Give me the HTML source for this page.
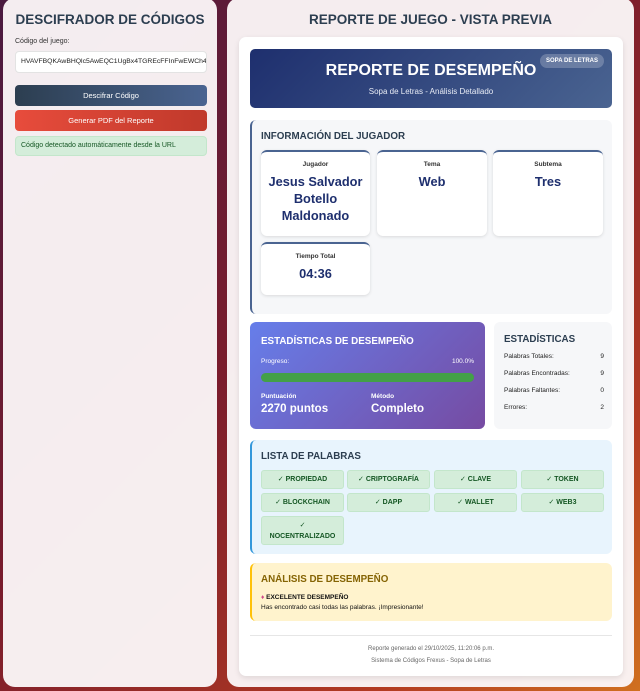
<!DOCTYPE html>
<html><head><meta charset="utf-8"><style>
*{box-sizing:border-box;margin:0;padding:0}
body{width:640px;height:691px;overflow:hidden;font-family:"Liberation Sans","DejaVu Sans",sans-serif;background:linear-gradient(135deg,#4a1a40 0%,#7a1c2c 45%,#b23a22 80%,#d0701f 100%);position:relative}
.abs{position:absolute}
.panel{background:rgba(250,245,246,0.97);border-radius:12px}
.t{text-align:center;font-weight:bold;color:#2c3e50}
.btn{position:absolute;left:15px;width:192px;height:21px;border-radius:4px;color:#fff;font-size:7.5px;text-align:center;line-height:21px}
.card{position:absolute;background:#fff;border-radius:6px;border-top:2px solid #4a6491;box-shadow:0 1px 3px rgba(0,0,0,.12);text-align:center;color:#1e2f6e}
.card .l{font-size:6.5px;font-weight:bold;color:#333;margin-top:9px}
.card .v{font-size:12.8px;font-weight:bold;line-height:17px;margin-top:5px}
.chip{position:absolute;background:#d4edda;border:1px solid #c3e6cb;border-radius:3px;color:#155724;font-size:7px;font-weight:bold;text-align:center;line-height:18px;height:19px;width:83px}
.sr{position:absolute;left:504px;width:100px;font-size:6.5px;color:#222}
.sr span{float:right}
.h{font-size:9.8px;font-weight:bold}
</style></head><body>
<div class="abs panel" style="left:3px;top:-2px;width:214px;height:689px"></div>
<div class="abs panel" style="left:227px;top:-2px;width:407px;height:689px"></div>

<div class="abs t" style="left:3px;width:214px;top:12px;font-size:13.5px">DESCIFRADOR DE CÓDIGOS</div>
<div class="abs" style="left:15px;top:38px;font-size:7px;color:#333">Código del juego:</div>
<div class="abs" style="left:15px;top:51px;width:192px;height:22px;background:#fff;border:1px solid #e3e3e3;border-radius:4px;font-size:6.8px;line-height:20px;padding-left:5px;overflow:hidden;white-space:nowrap;color:#222">HVAVFBQKAwBHQlc5AwEQC1UgBx4TGREcFFInFwEWCh4</div>
<div class="btn" style="top:85px;background:linear-gradient(90deg,#2c3e50,#4a6491)">Descifrar Código</div>
<div class="btn" style="top:110px;background:linear-gradient(90deg,#e74c3c,#c0392b)">Generar PDF del Reporte</div>
<div class="abs" style="left:15px;top:136px;width:192px;height:20px;background:#d4edda;border:1px solid #c3e6cb;border-radius:4px;font-size:7px;line-height:18px;padding-left:5px;color:#155724">Código detectado automáticamente desde la URL</div>

<div class="abs t" style="left:227px;width:407px;top:12px;font-size:13.5px">REPORTE DE JUEGO - VISTA PREVIA</div>
<div class="abs" style="left:239px;top:37px;width:384px;height:639px;background:#fff;border-radius:7px;box-shadow:0 2px 6px rgba(0,0,0,.1)"></div>

<div class="abs" style="left:250px;top:49px;width:362px;height:59px;border-radius:5px;background:linear-gradient(135deg,#1e2f6e,#4a6491)"></div>
<div class="abs" style="left:250px;width:362px;top:62px;text-align:center;color:#fff;font-weight:bold;font-size:16px">REPORTE DE DESEMPEÑO</div>
<div class="abs" style="left:250px;width:362px;top:87px;text-align:center;color:#e8ecf5;font-size:8px">Sopa de Letras - Análisis Detallado</div>
<div class="abs" style="left:540px;top:54px;width:64px;height:14px;border-radius:7px;background:rgba(255,255,255,.22);color:#fff;font-size:6px;font-weight:bold;text-align:center;line-height:14px">SOPA DE LETRAS</div>

<div class="abs" style="left:250px;top:120px;width:362px;height:194px;background:#f6f7f9;border-left:2px solid #4a6491;border-radius:6px"></div>
<div class="abs h" style="left:261px;top:131px;color:#2c3e50">INFORMACIÓN DEL JUGADOR</div>
<div class="card" style="left:261px;top:150px;width:109px;height:86px"><div class="l">Jugador</div><div class="v">Jesus Salvador<br>Botello<br>Maldonado</div></div>
<div class="card" style="left:377px;top:150px;width:110px;height:86px"><div class="l">Tema</div><div class="v">Web</div></div>
<div class="card" style="left:493px;top:150px;width:110px;height:86px"><div class="l">Subtema</div><div class="v">Tres</div></div>
<div class="card" style="left:261px;top:242px;width:109px;height:53px"><div class="l">Tiempo Total</div><div class="v">04:36</div></div>

<div class="abs" style="left:250px;top:322px;width:235px;height:107px;border-radius:6px;background:linear-gradient(135deg,#667eea,#764ba2)"></div>
<div class="abs h" style="left:261px;top:336px;color:#fff">ESTADÍSTICAS DE DESEMPEÑO</div>
<div class="abs" style="left:261px;top:358px;font-size:6.5px;color:#fff">Progreso:</div>
<div class="abs" style="left:440px;width:34px;text-align:right;top:358px;font-size:6.5px;color:#fff">100.0%</div>
<div class="abs" style="left:261px;top:373px;width:213px;height:9px;border-radius:5px;background:#43a047"></div>
<div class="abs" style="left:261px;top:393px;font-size:6.5px;font-weight:bold;color:#fff">Puntuación</div>
<div class="abs" style="left:371px;top:393px;font-size:6.5px;font-weight:bold;color:#fff">Método</div>
<div class="abs" style="left:261px;top:403px;font-size:11.5px;font-weight:bold;color:#fff">2270 puntos</div>
<div class="abs" style="left:371px;top:403px;font-size:11.5px;font-weight:bold;color:#fff">Completo</div>

<div class="abs" style="left:494px;top:322px;width:118px;height:107px;border-radius:6px;background:#f6f7f9"></div>
<div class="abs h" style="left:504px;top:334px;color:#2c3e50">ESTADÍSTICAS</div>
<div class="sr" style="top:353px">Palabras Totales:<span>9</span></div>
<div class="sr" style="top:370px">Palabras Encontradas:<span>9</span></div>
<div class="sr" style="top:387px">Palabras Faltantes:<span>0</span></div>
<div class="sr" style="top:404px">Errores:<span>2</span></div>

<div class="abs" style="left:250px;top:440px;width:362px;height:114px;background:#e8f4fd;border-left:2px solid #3498db;border-radius:6px"></div>
<div class="abs h" style="left:261px;top:451px;color:#2c3e50">LISTA DE PALABRAS</div>
<div class="chip" style="left:261px;top:470px">✓ PROPIEDAD</div>
<div class="chip" style="left:347px;top:470px">✓ CRIPTOGRAFÍA</div>
<div class="chip" style="left:434px;top:470px">✓ CLAVE</div>
<div class="chip" style="left:521px;top:470px">✓ TOKEN</div>
<div class="chip" style="left:261px;top:493px">✓ BLOCKCHAIN</div>
<div class="chip" style="left:347px;top:493px">✓ DAPP</div>
<div class="chip" style="left:434px;top:493px">✓ WALLET</div>
<div class="chip" style="left:521px;top:493px">✓ WEB3</div>
<div class="chip" style="left:261px;top:516px;height:29px;line-height:11px;padding-top:3px">✓<br>NOCENTRALIZADO</div>

<div class="abs" style="left:250px;top:563px;width:362px;height:58px;background:#fff3cd;border-left:2px solid #ffc107;border-radius:6px"></div>
<div class="abs h" style="left:261px;top:574px;color:#856404">ANÁLISIS DE DESEMPEÑO</div>
<div class="abs" style="left:261px;top:594px;font-size:6.5px;font-weight:bold;color:#111"><span style="color:#d04a8a">♦</span> EXCELENTE DESEMPEÑO</div>
<div class="abs" style="left:261px;top:604px;font-size:6.5px;color:#111">Has encontrado casi todas las palabras. ¡Impresionante!</div>

<div class="abs" style="left:250px;top:635px;width:362px;height:1px;background:#e6e6e6"></div>
<div class="abs" style="left:250px;width:362px;top:646px;text-align:center;font-size:6px;color:#666">Reporte generado el 29/10/2025, 11:20:06 p.m.</div>
<div class="abs" style="left:250px;width:362px;top:658px;text-align:center;font-size:6px;color:#666">Sistema de Códigos Frexus - Sopa de Letras</div>
</body></html>
